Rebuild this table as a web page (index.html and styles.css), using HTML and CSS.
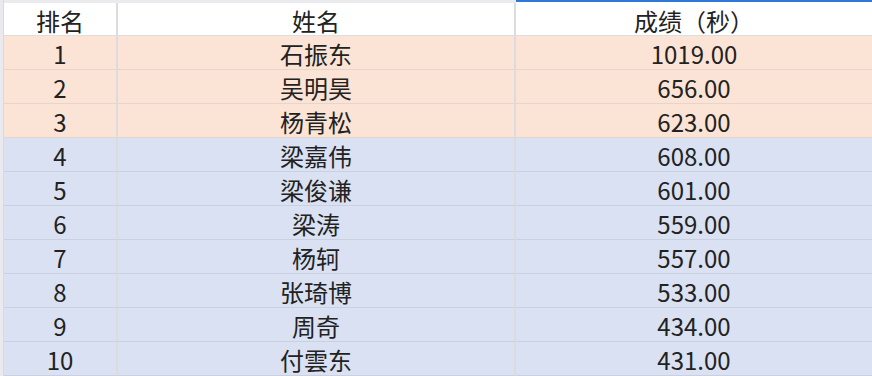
FILE: index.html
```html
<!DOCTYPE html>
<html lang="zh">
<head>
<meta charset="utf-8">
<link rel="stylesheet" href="styles.css">
</head>
<body>
<div class="sheet">
  <div class="strip gut"></div><div class="strip"></div><div class="strip"></div><div class="strip sel"></div>

  <div class="gut"></div><div class="c hd c1">排名</div><div class="c hd c2">姓名</div><div class="c hd">成绩（秒）</div>

  <div class="gut"></div><div class="c pk c1">1</div><div class="c pk c2">石振东</div><div class="c pk">1019.00</div>
  <div class="gut"></div><div class="c pk c1">2</div><div class="c pk c2">吴明昊</div><div class="c pk">656.00</div>
  <div class="gut"></div><div class="c pk c1">3</div><div class="c pk c2">杨青松</div><div class="c pk">623.00</div>
  <div class="gut"></div><div class="c bl c1">4</div><div class="c bl c2">梁嘉伟</div><div class="c bl">608.00</div>
  <div class="gut"></div><div class="c bl c1">5</div><div class="c bl c2">梁俊谦</div><div class="c bl">601.00</div>
  <div class="gut"></div><div class="c bl c1">6</div><div class="c bl c2">梁涛</div><div class="c bl">559.00</div>
  <div class="gut"></div><div class="c bl c1">7</div><div class="c bl c2">杨轲</div><div class="c bl">557.00</div>
  <div class="gut"></div><div class="c bl c1">8</div><div class="c bl c2">张琦博</div><div class="c bl">533.00</div>
  <div class="gut"></div><div class="c bl c1">9</div><div class="c bl c2">周奇</div><div class="c bl">434.00</div>
  <div class="gut"></div><div class="c bl c1">10</div><div class="c bl c2">付雲东</div><div class="c bl">431.00</div>
</div>
</body>
</html>
```

FILE: styles.css
```css
html, body {
  margin: 0;
  padding: 0;
  background: #ffffff;
}
.sheet {
  display: grid;
  grid-template-columns: 4px 114px 398px 356px;
  grid-template-rows: 3px 33px repeat(10, 34px);
  width: 872px;
  height: 376px;
  overflow: hidden;
  font-family: "Noto Sans CJK SC", "Noto Sans", sans-serif;
  font-size: 24px;
  color: #222222;
}
.strip {
  background: #ebebef;
}
.strip.sel {
  background: #ffffff;
  border-top: 2px solid #2f77d9;
}
.gut {
  background: #e9e9ee;
  border-right: 1px solid #dadade;
}
.c {
  display: flex;
  align-items: center;
  justify-content: center;
  padding-top: 3px;
  box-sizing: border-box;
  line-height: 1;
  white-space: nowrap;
}
.c1, .c2 {
  border-right: 2px solid #dcdcdf;
}
.hd {
  background: #ffffff;
  border-bottom: 1px solid #dedede;
}
.pk {
  background: #fbe4d5;
  border-bottom: 1px solid #e4d6cc;
}
.bl {
  background: #d9e1f2;
  border-bottom: 1px solid #c9d0de;
}
```
